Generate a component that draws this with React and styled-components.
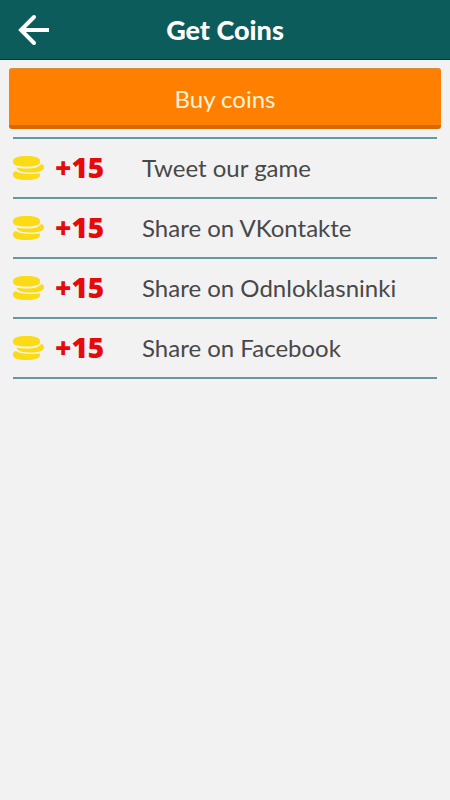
import styled, { createGlobalStyle } from 'styled-components'

const rewards = [
  { id: 'twitter', amount: 15, label: 'Tweet our game' },
  { id: 'vk', amount: 15, label: 'Share on VKontakte' },
  { id: 'ok', amount: 15, label: 'Share on Odnloklasninki' },
  { id: 'facebook', amount: 15, label: 'Share on Facebook' }
]

function BackIcon () {
  return (
    <svg width="32" height="32" viewBox="0 0 32 32" fill="none" stroke="#fff" strokeWidth="4" aria-hidden="true">
      <path d="M31 16H4" />
      <path d="M16 3L3 16l13 13" strokeLinecap="round" />
    </svg>
  )
}

function CoinsIcon () {
  return (
    <svg width="32" height="26" viewBox="0 0 32 26" fill="#fbdc14" aria-hidden="true">
      <path d="M0 6C0 2.500 5 1 13.500 1S27 2.500 27 6v1c0 3-4 4.500-13.500 4.500S0 10 0 7z" />
      <path d="M28 9c2.200.4 3 1.500 3 3 0 4-5 5.500-13 5.500-8.500 0-13.500-1-14.500-5 3 .8 6 1 10 1 8 0 12.500-1.200 14.500-4.500z" />
      <path d="M3 16c3 2.300 8 3 15 3 4 0 6.500-.2 9-.8v1.800c0 3.500-5 5-13.500 5S0 23.500 0 20v-1c0-1.500 1-2.500 3-3z" />
    </svg>
  )
}

export default function App () {
  return (
    <>
      <GlobalStyle />
      <Header>
        <BackButton type="button" aria-label="Back">
          <BackIcon />
        </BackButton>
        <Title>Get Coins</Title>
      </Header>
      <Content>
        <BuyButton type="button">Buy coins</BuyButton>
        <RewardList>
          {rewards.map(({ id, amount, label }) => (
            <li key={id}>
              <RewardButton type="button">
                <CoinsIcon />
                <Amount>+{amount}</Amount>
                <span>{label}</span>
              </RewardButton>
            </li>
          ))}
        </RewardList>
      </Content>
    </>
  )
}

const GlobalStyle = createGlobalStyle`
  * {
    box-sizing: border-box;
  }

  body {
    margin: 0;
    background: #f2f2f2;
    color: #484848;
    font-family: Lato, "Liberation Sans", sans-serif;
  }

  button {
    border: 0;
    padding: 0;
    background: none;
    color: inherit;
    font: inherit;
    cursor: pointer;
  }
`

const Header = styled.header`
  display: grid;
  grid-template-columns: 48px 1fr 48px;
  align-items: center;
  height: 60px;
  padding: 0 16px;
  background: #0c5c5b;
  border-bottom: 1px solid #04393a;
`

const BackButton = styled.button`
  display: flex;
  align-items: center;
  height: 48px;
  padding-left: 2px;
`

const Title = styled.h1`
  margin: 0;
  color: #fff;
  font-size: 27px;
  font-weight: 900;
  line-height: 32px;
  text-align: center;
`

const Content = styled.main`
  padding: 8px 9px;
`

const BuyButton = styled.button`
  display: block;
  width: 100%;
  height: 61px;
  padding-top: 4px;
  border-top: 1px solid #dd8a33;
  border-bottom: 4px solid #d66a02;
  border-radius: 3px;
  background: #ff8000;
  color: #fff3d6;
  font-size: 24px;
  line-height: 32px;
`

const RewardList = styled.ul`
  margin: 8px 4px 0;
  padding: 0;
  border-top: 2px solid #639a9f;
  list-style: none;

  li {
    border-bottom: 2px solid #639a9f;
  }
`

const RewardButton = styled.button`
  display: grid;
  grid-template-columns: 42px 87px 1fr;
  align-items: center;
  width: 100%;
  height: 58px;
  font-size: 24px;
  line-height: 32px;
  text-align: left;
`

const Amount = styled.span`
  padding-bottom: 2px;
  color: #e60a0a;
  font-family: "Open Sans", "Liberation Sans", sans-serif;
  font-size: 28px;
  font-weight: 800;
`
